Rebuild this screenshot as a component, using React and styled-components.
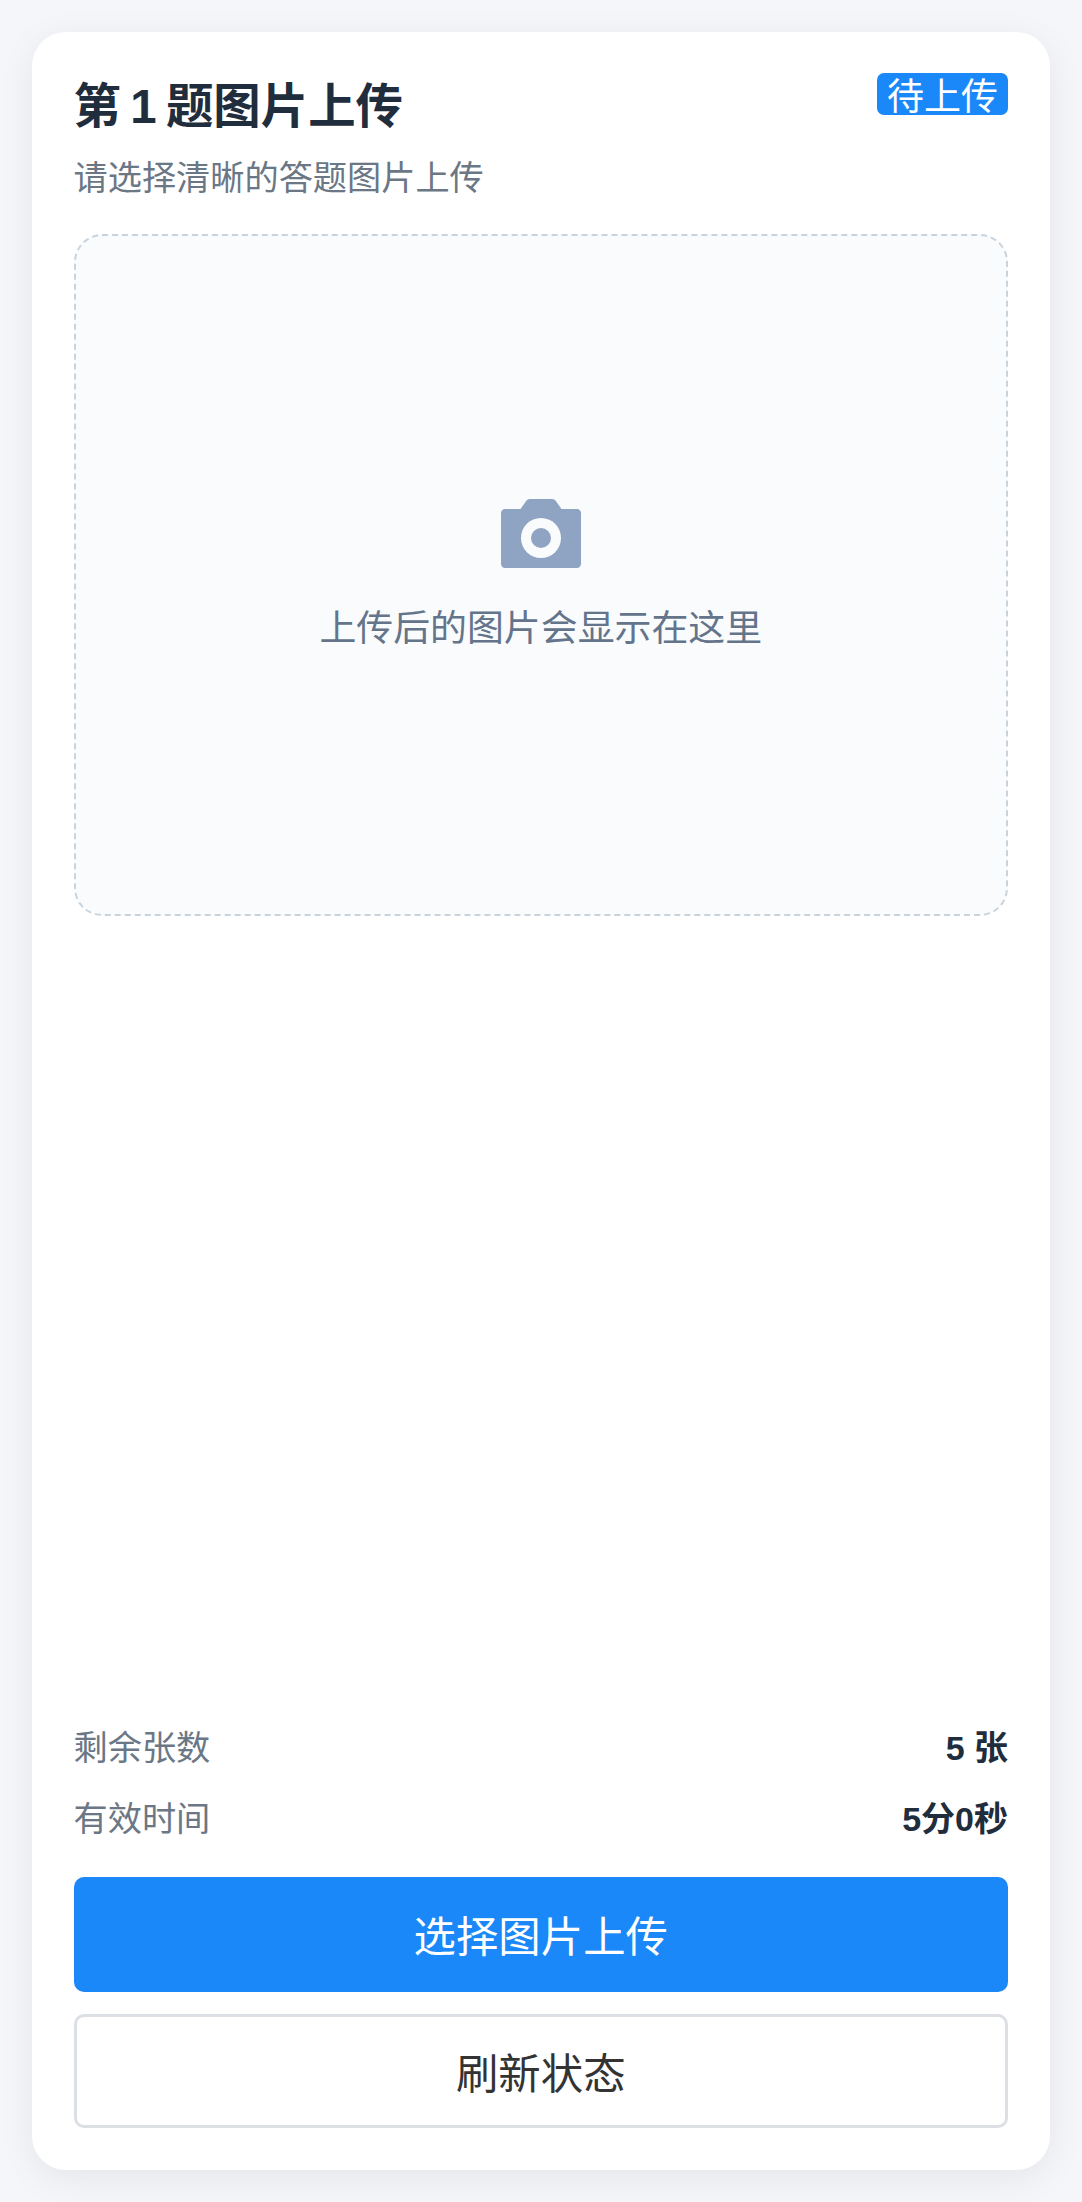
import React from "react";
import styled, { createGlobalStyle } from "styled-components";

const GlobalStyle = createGlobalStyle`
  html, body {
    margin: 0;
    padding: 0;
    background: #f4f6f9;
  }
  * {
    box-sizing: border-box;
  }
  body {
    font-family: "Liberation Sans", "Noto Sans CJK SC", sans-serif;
  }
`;

const Page = styled.div`
  height: 2202px;
  padding: 32px;
  display: flex;
`;

const Card = styled.div`
  flex: 1;
  display: flex;
  flex-direction: column;
  padding: 42px 42px 42px 41.5px;
  background: #fff;
  border-radius: 34px;
  box-shadow: 0 8px 36px rgba(0, 0, 0, 0.07);
`;

const Header = styled.div`
  display: flex;
  justify-content: space-between;
  align-items: flex-start;
`;

const Title = styled.h1`
  margin: 0;
  font-size: 47.4px;
  line-height: 65px;
  font-weight: 700;
  word-spacing: -3.8px;
  color: #1f2d3d;
`;

const Badge = styled.span`
  margin-top: -1px;
  height: 42px;
  padding: 0 10px;
  display: flex;
  align-items: center;
  font-size: 37px;
  color: #fff;
  background: #1a88f8;
  border-radius: 7px;
`;

const Subtitle = styled.p`
  margin: 14px 0 0;
  font-size: 34.2px;
  line-height: 50px;
  color: #6b7785;
`;

const Preview = styled.div`
  margin-top: 31px;
  height: 682px;
  padding-top: 3px;
  display: flex;
  flex-direction: column;
  align-items: center;
  justify-content: center;
  gap: 35px;
  background: #f9fbfd;
  border: 2px dashed #c9d3dc;
  border-radius: 28px;
`;

const PreviewText = styled.div`
  font-size: 36.9px;
  line-height: 50px;
  color: #64748b;
`;

const Spacer = styled.div`
  flex: 1;
`;

const InfoRow = styled.div`
  display: flex;
  justify-content: space-between;
  align-items: center;
  height: 48px;
  margin-bottom: 23px;
  font-size: 34.2px;
`;

const InfoLabel = styled.span`
  color: #6b7785;
`;

const InfoValue = styled.span`
  font-weight: 700;
  font-size: 34px;
  color: #1f2d3d;
`;

const Button = styled.button`
  width: 100%;
  height: ${(p) => (p.$primary ? "115px" : "114px")};
  margin-top: ${(p) => (p.$primary ? "14px" : "22px")};
  padding: 0 0 2px;
  font-family: inherit;
  font-size: 42.4px;
  color: ${(p) => (p.$primary ? "#fff" : "#333")};
  background: ${(p) => (p.$primary ? "#1a88f8" : "#fff")};
  border: ${(p) => (p.$primary ? "none" : "3px solid #dcdfe3")};
  border-radius: 10px;
`;

function CameraIcon() {
  return (
    <svg width="80" height="70" viewBox="0 0 80 70">
      <path
        d="M4 10H19.500L25 2.200C26 .8 27.400 0 29 0H51C52.600 0 54 .8 55 2.200L60.500 10H76C78.200 10 80 11.800 80 14V65C80 67.200 78.200 69 76 69H4C1.800 69 0 67.200 0 65V14C0 11.800 1.800 10 4 10Z"
        fill="#8fa3c2"
      />
      <circle cx="40" cy="39" r="20" fill="#f9fbfd" />
      <circle cx="40" cy="39" r="10" fill="#8fa3c2" />
    </svg>
  );
}

export default function App() {
  return (
    <Page>
      <GlobalStyle />
      <Card>
        <Header>
          <Title>第 1 题图片上传</Title>
          <Badge>待上传</Badge>
        </Header>
        <Subtitle>请选择清晰的答题图片上传</Subtitle>
        <Preview>
          <CameraIcon />
          <PreviewText>上传后的图片会显示在这里</PreviewText>
        </Preview>
        <Spacer />
        <InfoRow>
          <InfoLabel>剩余张数</InfoLabel>
          <InfoValue>5 张</InfoValue>
        </InfoRow>
        <InfoRow>
          <InfoLabel>有效时间</InfoLabel>
          <InfoValue>5分0秒</InfoValue>
        </InfoRow>
        <Button $primary>选择图片上传</Button>
        <Button>刷新状态</Button>
      </Card>
    </Page>
  );
}
